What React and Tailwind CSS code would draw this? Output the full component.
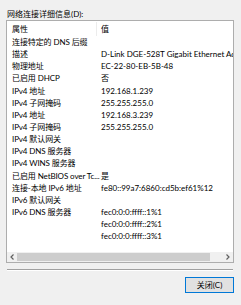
import React from "react";

const rows = [
  ["连接特定的 DNS 后缀", ""],
  ["描述", "D-Link DGE-528T Gigabit Ethernet Adapter"],
  ["物理地址", "EC-22-80-EB-5B-48"],
  ["已启用 DHCP", "否"],
  ["IPv4 地址", "192.168.1.239"],
  ["IPv4 子网掩码", "255.255.255.0"],
  ["IPv4 地址", "192.168.3.239"],
  ["IPv4 子网掩码", "255.255.255.0"],
  ["IPv4 默认网关", ""],
  ["IPv4 DNS 服务器", ""],
  ["IPv4 WINS 服务器", ""],
  ["已启用 NetBIOS over Tc...", "是"],
  ["连接-本地 IPv6 地址", "fe80::99a7:6860:cd5b:ef61%12"],
  ["IPv6 默认网关", ""],
  ["IPv6 DNS 服务器", "fec0:0:0:ffff::1%1"],
  ["", "fec0:0:0:ffff::2%1"],
  ["", "fec0:0:0:ffff::3%1"],
];

export default function App() {
  return (
    <div
      className="w-[241px] h-[305px] bg-[#f0f0f0] text-[#000] overflow-hidden flex flex-col"
      style={{ fontFamily: 'Lato, "Noto Sans CJK SC", sans-serif' }}
    >
      <div className="h-[20px] pl-[7px] pt-[8px] text-[8px] leading-[12px] whitespace-nowrap">
        网络连接详细信息(D):
      </div>
      <div className="ml-[6px] w-[228px] h-[243px] border border-[#adadad] bg-white flex flex-col overflow-hidden">
        <div className="h-[15px] pt-[1px] flex items-center text-[8px] whitespace-nowrap shrink-0">
          <div className="w-[90px] shrink-0 pl-[5px] h-full flex items-center border-r border-[#ececec]">属性</div>
          <div className="pl-[4px]">值</div>
        </div>
        <div className="flex-1 flex flex-col overflow-hidden">
          {rows.map((r, i) => (
            <div key={i} className="h-[12.15px] flex items-center text-[8px] whitespace-nowrap shrink-0">
              <div className="w-[90px] shrink-0 pl-[5px] tracking-[-0.1px]">{r[0]}</div>
              <div className="pl-[4px] shrink-0">{r[1]}</div>
            </div>
          ))}
        </div>
        <div className="h-[10px] flex items-center bg-[#f0f0f0] shrink-0">
          <div className="w-[10px] h-full flex items-center justify-center">
            <svg width="4" height="6" viewBox="0 0 4 6"><path d="M3.5 0.5 L1 3 L3.5 5.5" fill="none" stroke="#606060" strokeWidth="1.2" /></svg>
          </div>
          <div className="flex-1 h-full flex items-center">
            <div className="w-[193px] h-[8px] bg-[#cdcdcd]" />
          </div>
          <div className="w-[10px] h-full flex items-center justify-center">
            <svg width="4" height="6" viewBox="0 0 4 6"><path d="M0.5 0.5 L3 3 L0.5 5.5" fill="none" stroke="#606060" strokeWidth="1.2" /></svg>
          </div>
        </div>
      </div>
      <div className="ml-[7px] w-[226px] mt-[6px] h-[2px] border-t border-[#a0a0a0] border-b border-b-white" />
      <div className="flex justify-end pr-[7px] mt-[6px]">
        <div className="w-[49px] h-[16px] border border-[#0078d7] bg-[#e1e1e1] flex items-center justify-center text-[8px] whitespace-nowrap">
          关闭(C)
        </div>
      </div>
    </div>
  );
}
